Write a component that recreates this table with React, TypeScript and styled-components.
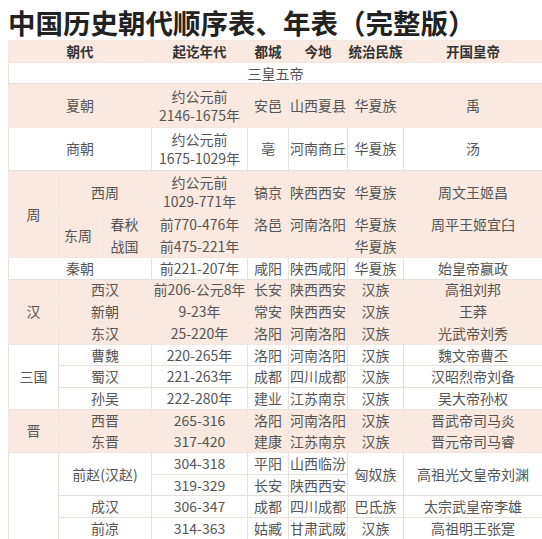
import styled, { createGlobalStyle } from "styled-components";

const peach = "#f9e9e0";
const textColour = "#555";

const GlobalStyle = createGlobalStyle`
  html, body {
    margin: 0;
    padding: 0;
    background: #fff;
  }
  body {
    font-family: "Noto Sans CJK SC", "Noto Sans", sans-serif;
  }
`;

const Page = styled.div`
  width: 542px;
  height: 539px;
  overflow: hidden;
  padding-left: 8px;
  box-sizing: border-box;
`;

const Title = styled.h1`
  margin: 0;
  height: 40px;
  line-height: 44px;
  font-size: 27.5px;
  font-weight: 700;
  color: #222;
  white-space: nowrap;
`;

const Table = styled.table`
  width: 534px;
  table-layout: fixed;
  border-collapse: collapse;
  font-size: 14px;
  color: ${textColour};
`;

type Tone = "peach" | "white";

const Row = styled.tr<{ $tone: Tone; $double?: boolean }>`
  height: ${(p) => (p.$double ? "43.4px" : "21.7px")};
  background: ${(p) => (p.$tone === "peach" ? peach : "#fff")};

  & > td,
  & > th {
    border: 1px solid
      ${(p) => (p.$tone === "peach" ? "#f2e6e0" : "#e6e0dc")};
  }
`;

const Head = styled.th`
  padding: 0;
  font-size: 13.5px;
  font-weight: 700;
  color: #333;
  text-align: center;
  line-height: 20px;
  white-space: nowrap;
  overflow: visible;
`;

const Cell = styled.td`
  padding: 0;
  text-align: center;
  line-height: 19px;
  white-space: nowrap;
`;

const Wrap = styled(Cell)`
  white-space: normal;
  line-height: 19px;
`;

const widths = [50, 39, 54, 96, 41, 59, 56, 139];

export default function App() {
  return (
    <>
      <GlobalStyle />
      <Page>
        <Title>中国历史朝代顺序表、年表（完整版）</Title>
        <Table>
          <colgroup>
            {widths.map((w, i) => (
              <col key={i} style={{ width: w }} />
            ))}
          </colgroup>
          <tbody>
            <Row $tone="peach">
              <Head colSpan={3}>朝代</Head>
              <Head>起讫年代</Head>
              <Head>都城</Head>
              <Head>今地</Head>
              <Head>统治民族</Head>
              <Head>开国皇帝</Head>
            </Row>
            <Row $tone="white">
              <Cell colSpan={8}>三皇五帝</Cell>
            </Row>
            <Row $tone="peach" $double>
              <Cell colSpan={3}>夏朝</Cell>
              <Wrap>
                约公元前
                <br />
                2146-1675年
              </Wrap>
              <Cell>安邑</Cell>
              <Cell>山西夏县</Cell>
              <Cell>华夏族</Cell>
              <Cell>禹</Cell>
            </Row>
            <Row $tone="white" $double>
              <Cell colSpan={3}>商朝</Cell>
              <Wrap>
                约公元前
                <br />
                1675-1029年
              </Wrap>
              <Cell>亳</Cell>
              <Cell>河南商丘</Cell>
              <Cell>华夏族</Cell>
              <Cell>汤</Cell>
            </Row>
            <Row $tone="peach" $double>
              <Cell rowSpan={3}>周</Cell>
              <Cell colSpan={2}>西周</Cell>
              <Wrap>
                约公元前
                <br />
                1029-771年
              </Wrap>
              <Cell>镐京</Cell>
              <Cell>陕西西安</Cell>
              <Cell>华夏族</Cell>
              <Cell>周文王姬昌</Cell>
            </Row>
            <Row $tone="peach">
              <Cell rowSpan={2}>东周</Cell>
              <Cell>春秋</Cell>
              <Cell>前770-476年</Cell>
              <Cell>洛邑</Cell>
              <Cell>河南洛阳</Cell>
              <Cell>华夏族</Cell>
              <Cell>周平王姬宜臼</Cell>
            </Row>
            <Row $tone="peach">
              <Cell>战国</Cell>
              <Cell>前475-221年</Cell>
              <Cell />
              <Cell />
              <Cell>华夏族</Cell>
              <Cell />
            </Row>
            <Row $tone="white">
              <Cell colSpan={3}>秦朝</Cell>
              <Cell>前221-207年</Cell>
              <Cell>咸阳</Cell>
              <Cell>陕西咸阳</Cell>
              <Cell>华夏族</Cell>
              <Cell>始皇帝嬴政</Cell>
            </Row>
            <Row $tone="peach">
              <Cell rowSpan={3}>汉</Cell>
              <Cell colSpan={2}>西汉</Cell>
              <Cell>前206-公元8年</Cell>
              <Cell>长安</Cell>
              <Cell>陕西西安</Cell>
              <Cell>汉族</Cell>
              <Cell>高祖刘邦</Cell>
            </Row>
            <Row $tone="peach">
              <Cell colSpan={2}>新朝</Cell>
              <Cell>9-23年</Cell>
              <Cell>常安</Cell>
              <Cell>陕西西安</Cell>
              <Cell>汉族</Cell>
              <Cell>王莽</Cell>
            </Row>
            <Row $tone="peach">
              <Cell colSpan={2}>东汉</Cell>
              <Cell>25-220年</Cell>
              <Cell>洛阳</Cell>
              <Cell>河南洛阳</Cell>
              <Cell>汉族</Cell>
              <Cell>光武帝刘秀</Cell>
            </Row>
            <Row $tone="white">
              <Cell rowSpan={3}>三国</Cell>
              <Cell colSpan={2}>曹魏</Cell>
              <Cell>220-265年</Cell>
              <Cell>洛阳</Cell>
              <Cell>河南洛阳</Cell>
              <Cell>汉族</Cell>
              <Cell>魏文帝曹丕</Cell>
            </Row>
            <Row $tone="white">
              <Cell colSpan={2}>蜀汉</Cell>
              <Cell>221-263年</Cell>
              <Cell>成都</Cell>
              <Cell>四川成都</Cell>
              <Cell>汉族</Cell>
              <Cell>汉昭烈帝刘备</Cell>
            </Row>
            <Row $tone="white">
              <Cell colSpan={2}>孙吴</Cell>
              <Cell>222-280年</Cell>
              <Cell>建业</Cell>
              <Cell>江苏南京</Cell>
              <Cell>汉族</Cell>
              <Cell>吴大帝孙权</Cell>
            </Row>
            <Row $tone="peach">
              <Cell rowSpan={2}>晋</Cell>
              <Cell colSpan={2}>西晋</Cell>
              <Cell>265-316</Cell>
              <Cell>洛阳</Cell>
              <Cell>河南洛阳</Cell>
              <Cell>汉族</Cell>
              <Cell>晋武帝司马炎</Cell>
            </Row>
            <Row $tone="peach">
              <Cell colSpan={2}>东晋</Cell>
              <Cell>317-420</Cell>
              <Cell>建康</Cell>
              <Cell>江苏南京</Cell>
              <Cell>汉族</Cell>
              <Cell>晋元帝司马睿</Cell>
            </Row>
            <Row $tone="white">
              <Cell rowSpan={4} />
              <Cell colSpan={2} rowSpan={2}>
                前赵(汉赵)
              </Cell>
              <Cell>304-318</Cell>
              <Cell>平阳</Cell>
              <Cell>山西临汾</Cell>
              <Cell rowSpan={2}>匈奴族</Cell>
              <Cell rowSpan={2}>高祖光文皇帝刘渊</Cell>
            </Row>
            <Row $tone="white">
              <Cell>319-329</Cell>
              <Cell>长安</Cell>
              <Cell>陕西西安</Cell>
            </Row>
            <Row $tone="white">
              <Cell colSpan={2}>成汉</Cell>
              <Cell>306-347</Cell>
              <Cell>成都</Cell>
              <Cell>四川成都</Cell>
              <Cell>巴氐族</Cell>
              <Cell>太宗武皇帝李雄</Cell>
            </Row>
            <Row $tone="white">
              <Cell colSpan={2}>前凉</Cell>
              <Cell>314-363</Cell>
              <Cell>姑臧</Cell>
              <Cell>甘肃武威</Cell>
              <Cell>汉族</Cell>
              <Cell>高祖明王张寔</Cell>
            </Row>
          </tbody>
        </Table>
      </Page>
    </>
  );
}
